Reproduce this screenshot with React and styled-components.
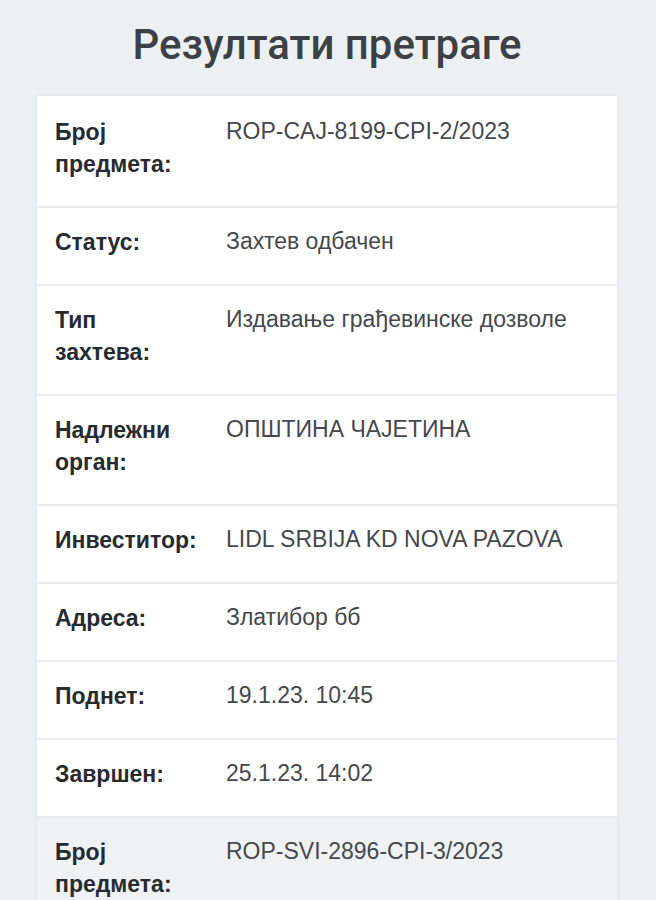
import React from 'react';
import styled, { createGlobalStyle } from 'styled-components';

const GlobalStyle = createGlobalStyle`
  html, body {
    margin: 0;
    padding: 0;
    background: #edf0f3;
  }
  body {
    font-family: "Liberation Sans", Arial, sans-serif;
  }
`;

const Page = styled.div`
  width: 100%;
  min-height: 900px;
  padding: 20px 39px 0 37px;
  box-sizing: border-box;
  background: #edf0f3;
`;

const Title = styled.h1`
  margin: 0 0 26px;
  font-family: Roboto, "Liberation Sans", sans-serif;
  font-weight: 500;
  font-size: 42px;
  line-height: 50px;
  color: #3d4146;
  text-align: center;
`;

const Card = styled.div`
  background: #ffffff;
  box-shadow: 0 0 4px rgba(0, 0, 0, 0.07);
`;

const Record = styled.div`
  background: ${props => props.striped ? '#eff1f3' : '#ffffff'};
`;

const Row = styled.div`
  display: grid;
  grid-template-columns: 171px 1fr;
  border-top: 2px solid ${props => props.first ? 'transparent' : '#e9eaec'};
`;

const Label = styled.div`
  padding: 18px 18px 26px;
  font-size: 23px;
  line-height: 32px;
  font-weight: 700;
  color: #272b30;
`;

const Value = styled.div`
  padding: 17px 18px 27px;
  font-size: 23px;
  line-height: 32px;
  color: #45484c;
`;

const results = [
  [
    ['Број предмета:', 'ROP-CAJ-8199-CPI-2/2023'],
    ['Статус:', 'Захтев одбачен'],
    ['Тип захтева:', 'Издавање грађевинске дозволе'],
    ['Надлежни орган:', 'ОПШТИНА ЧАЈЕТИНА'],
    ['Инвеститор:', 'LIDL SRBIJA KD NOVA PAZOVA'],
    ['Адреса:', 'Златибор бб'],
    ['Поднет:', '19.1.23. 10:45'],
    ['Завршен:', '25.1.23. 14:02'],
  ],
  [
    ['Број предмета:', 'ROP-SVI-2896-CPI-3/2023'],
  ],
];

const App = () => (
  <>
    <GlobalStyle />
    <Page>
      <Title>Резултати претраге</Title>
      <Card>
        {results.map((record, ri) => (
          <Record striped={ri % 2 === 1} key={ri}>
            {record.map(([label, value], i) => (
              <Row first={ri === 0 && i === 0} key={label}>
                <Label>{label}</Label>
                <Value>{value}</Value>
              </Row>
            ))}
          </Record>
        ))}
      </Card>
    </Page>
  </>
);

export default App;
